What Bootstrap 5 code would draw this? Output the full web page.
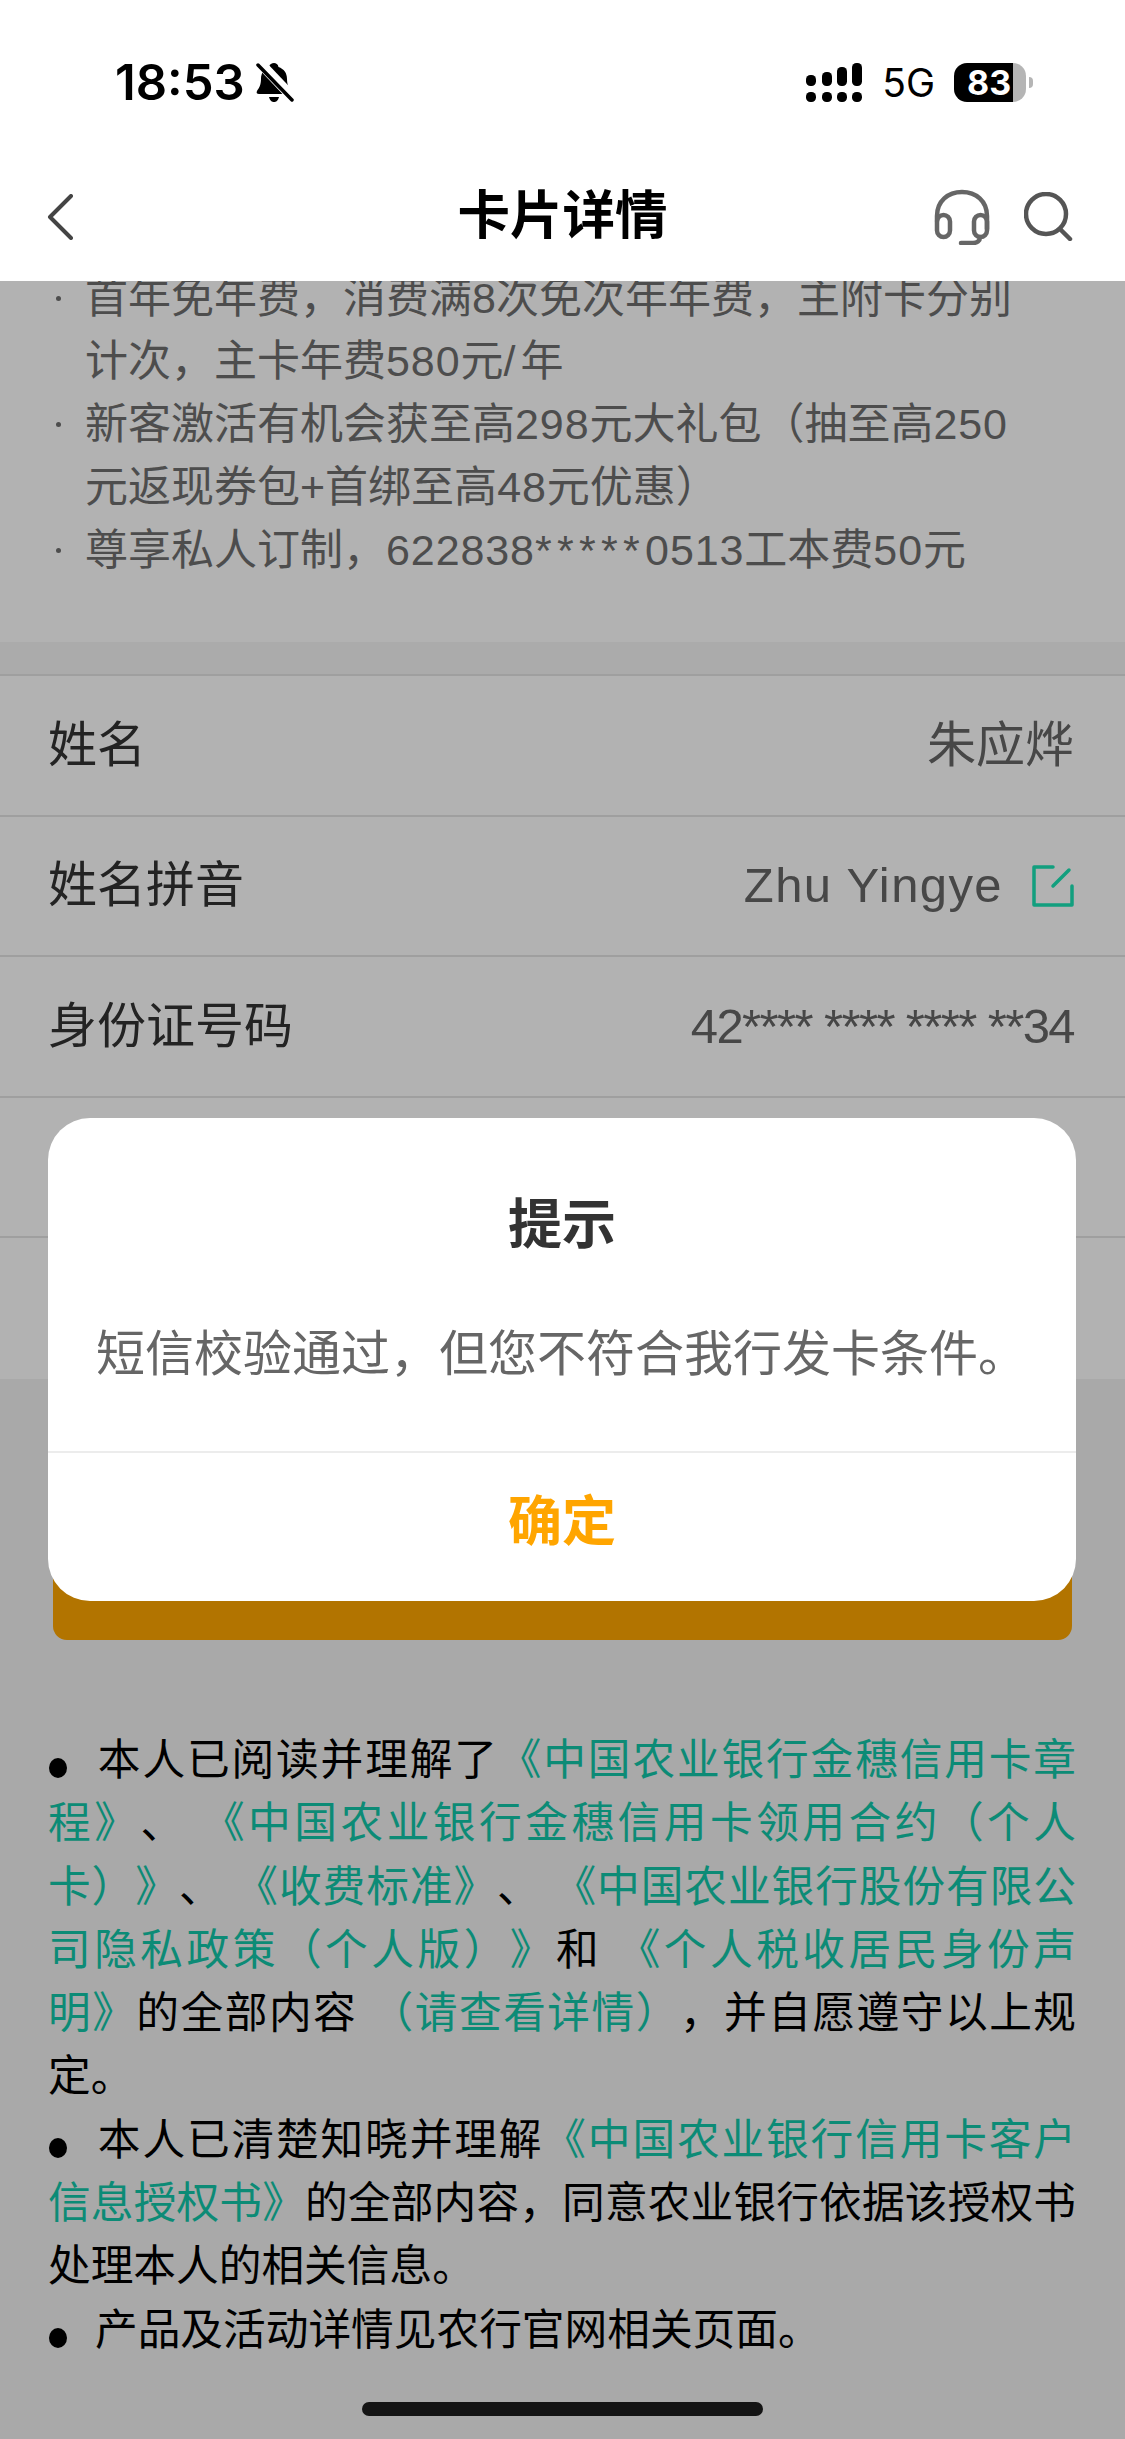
<!DOCTYPE html>
<html lang="zh-CN">
<head>
    <meta charset="UTF-8">
    <meta name="viewport" content="width=device-width, initial-scale=1.0">
    <title>卡片详情</title>
    <link href="https://cdn.jsdelivr.net/npm/bootstrap@5.3.2/dist/css/bootstrap.min.css" rel="stylesheet">
    <style>
        html, body {
            height: 2439px;
            overflow: hidden;
        }
        body {
            font-family: "Liberation Sans", "Noto Sans CJK SC", sans-serif;
            background-color: #f3f3f3;
            color: #000;
            position: relative;
            text-spacing-trim: space-all;
        }
        /* top bars stay above the backdrop */
        .top-head {
            height: 281px;
            position: relative;
            z-index: 1060;
            background: #fff;
        }
        .status-line {
            height: 140px;
            padding: 25px 92px 0 115px;
        }
        .clock {
            font-family: Inter, "Liberation Sans", sans-serif;
            font-size: 49px;
            font-weight: 600;
            line-height: 1;
        }
        .bell-icon {
            margin-left: 11px;
        }
        .net-label {
            font-family: Inter, "Liberation Sans", sans-serif;
            font-size: 39px;
            line-height: 1;
            margin: 0 19px 0 20px;
        }
        .battery {
            width: 72px;
            height: 39px;
            border-radius: 13px;
            overflow: hidden;
            background: linear-gradient(to right, #000 59px, #b5b5b5 59px);
            color: #fff;
            font-family: Inter, "Liberation Sans", sans-serif;
            font-size: 34px;
            font-weight: 700;
            line-height: 39px;
            padding-left: 13px;
        }
        .battery-nub {
            width: 4px;
            height: 11px;
            margin-left: 3px;
            background: #b5b5b5;
            border-radius: 0 4px 4px 0;
        }
        .title-line {
            height: 141px;
            padding: 12px 52px 0 47px;
        }
        .title-text {
            font-size: 52.5px;
            font-weight: 700;
            line-height: 1;
            color: #000;
            position: absolute;
            left: 0;
            right: 0;
            text-align: center;
        }
        .search-icon {
            margin-left: 34px;
        }
        .intro-list {
            background: #fff;
            margin: -14px 0 0 0;
            padding: 0 0 60px 56px;
            color: #6f6f6f;
            font-size: 43px;
            line-height: 63px;
        }
        .intro-item {
            width: 985px;
        }
        .tick {
            flex: 0 0 5px;
            height: 5px;
            margin: 29px 24px 0 0;
            border-radius: 50%;
            background: #6f6f6f;
        }
        .digits {
            letter-spacing: 0.9px;
        }
        .stars {
            letter-spacing: 5.3px;
        }
        .slash {
            letter-spacing: 5px;
        }
        .info-band {
            height: 32px;
            background: #f5f5f5;
        }
        .info-list {
            --bs-list-group-border-color: #e4e4e4;
            --bs-list-group-border-width: 2px;
            --bs-list-group-bg: #fff;
            --bs-list-group-item-padding-x: 48px;
            --bs-list-group-item-padding-y: 0;
            border-top: 2px solid #e4e4e4;
            border-radius: 0;
        }
        .info-row {
            height: 140.6px;
            padding-right: 51px !important;
            font-size: 49px;
            color: #333;
        }
        .info-value {
            color: #666;
        }
        .pinyin {
            letter-spacing: 1.4px;
        }
        .pinyin svg {
            margin-left: 29px;
        }
        .idno {
            letter-spacing: -1.6px;
        }
        .apply-btn {
            display: block;
            height: 90px;
            margin: 171px 53px 0 53px;
            width: 1019px;
            border: 0;
            border-radius: 14px;
            background: #ffa600;
        }
        .agree-text {
            margin: 89px 49px 0 48px;
            font-size: 42.7px;
            line-height: 63.3px;
            text-align: justify;
            color: #000;
        }
        .agree-text a {
            color: #12c7a9;
            text-decoration: none;
        }
        .big-dot {
            display: inline-block;
            width: 18px;
            height: 20px;
            margin: 0 29px 0 1px;
            border-radius: 50%;
            background: #000;
            vertical-align: -3px;
        }
        .big-dot-tight {
            margin-right: 28px;
        }
        .modal-backdrop {
            --bs-backdrop-opacity: 0.3;
        }
        .tip-dialog {
            position: absolute;
            top: 1118px;
            left: 48px;
            width: 1028px;
            z-index: 1055;
            --bs-modal-border-width: 0;
            --bs-modal-border-radius: 42px;
            --bs-modal-bg: #fff;
        }
        .tip-title {
            padding-top: 72px;
            font-size: 54px;
            font-weight: 700;
            line-height: 70px;
            color: #333;
            text-align: center;
        }
        .tip-msg {
            padding: 64px 0 67px 48px;
            font-size: 49px;
            line-height: 60px;
            color: #666;
            white-space: nowrap;
        }
        .tip-ok {
            height: 150px;
            padding: 0 0 10px;
            border: 0;
            border-top: 2px solid #ececec;
            border-radius: 0;
            background: none;
            font-size: 54px;
            font-weight: 700;
            color: #ffa500;
        }
        .home-bar {
            position: absolute;
            left: 362px;
            top: 2402px;
            width: 401px;
            height: 14px;
            border-radius: 7px;
            background: #141414;
            z-index: 1060;
        }
    </style>
</head>
<body>
    <header class="top-head">
        <div class="status-line d-flex align-items-center">
            <span class="clock">18:53</span>
            <svg class="bell-icon" width="38" height="41" viewBox="0 0 38 41">
                <path d="M18 1c2 0 4 1 4.5 4C28 7 31 11 31 17c0 6 2 9 4 12 1 2 0 3-2 3H3c-2 0-3-1-2-3 2-3 4-6 4-12 0-6 3-10 8-12C13.5 2 16 1 18 1z" fill="#000"/>
                <path d="M13 35h10c-1 4-3 5-5 5s-4-1-5-5z" fill="#000"/>
                <path d="M4 1l36 38" stroke="#fff" stroke-width="10"/>
                <path d="M2 3l34 35" stroke="#000" stroke-width="3.5" stroke-linecap="round"/>
            </svg>
            <div class="ms-auto d-flex align-items-center">
                <svg width="56" height="39" viewBox="0 0 56 39" fill="#000">
                    <rect x="0" y="12" width="10" height="11" rx="4.5"/>
                    <rect x="16" y="9" width="10" height="14" rx="4.5"/>
                    <rect x="31" y="4" width="10" height="19" rx="4.5"/>
                    <rect x="46" y="0" width="10" height="23" rx="4.5"/>
                    <rect x="0" y="29" width="10" height="10" rx="4.5"/>
                    <rect x="16" y="29" width="10" height="10" rx="4.5"/>
                    <rect x="31" y="29" width="10" height="10" rx="4.5"/>
                    <rect x="46" y="29" width="10" height="10" rx="4.5"/>
                </svg>
                <span class="net-label">5G</span>
                <div class="battery">83</div>
                <div class="battery-nub"></div>
            </div>
        </div>
        <div class="title-line d-flex align-items-center position-relative">
            <svg width="27" height="46" viewBox="0 0 27 46" fill="none" stroke="#444" stroke-width="4" stroke-linecap="round" stroke-linejoin="round">
                <path d="M24 2L3 23l21 21"/>
            </svg>
            <div class="title-text">卡片详情</div>
            <div class="ms-auto d-flex align-items-center">
                <svg width="56" height="56" viewBox="0 0 56 56" fill="none" stroke="#666" stroke-width="4.5" stroke-linecap="round">
                    <path d="M3 32V27C3 12 14 3 28 3s25 9 25 24v13"/>
                    <rect x="3" y="26" width="13" height="22" rx="6.5"/>
                    <rect x="40" y="26" width="13" height="22" rx="6.5"/>
                    <path d="M46 48c0 4-3 6-7 6H27"/>
                </svg>
                <svg class="search-icon" width="49" height="49" viewBox="0 0 49 49" fill="none" stroke="#555" stroke-width="4.5" stroke-linecap="round">
                    <circle cx="22" cy="22" r="20"/>
                    <path d="M36 37l10 10"/>
                </svg>
            </div>
        </div>
    </header>

    <ul class="intro-list list-unstyled">
        <li class="intro-item d-flex"><span class="tick"></span><span>首年免年费，消费满8次免次年年费，主附卡分别计次，主卡年费<span class="digits">580</span>元<span class="slash">/</span>年</span></li>
        <li class="intro-item d-flex"><span class="tick"></span><span>新客激活有机会获至高<span class="digits">298</span>元大礼包（抽至高<span class="digits">250</span>元返现券包+首绑至高<span class="digits">48</span>元优惠）</span></li>
        <li class="intro-item d-flex"><span class="tick"></span><span>尊享私人订制，<span class="digits">622838</span><span class="stars">*****</span><span class="digits">0513</span>工本费<span class="digits">50</span>元</span></li>
    </ul>

    <div class="info-band"></div>
    <div class="info-list list-group list-group-flush">
        <div class="info-row list-group-item d-flex align-items-center justify-content-between">
            <span>姓名</span><span class="info-value">朱应烨</span>
        </div>
        <div class="info-row list-group-item d-flex align-items-center justify-content-between">
            <span>姓名拼音</span>
            <span class="info-value pinyin d-flex align-items-center">Zhu Yingye
                <svg width="42" height="42" viewBox="0 0 42 42" fill="none" stroke="#1ae4b5" stroke-width="3.5" stroke-linecap="round" stroke-linejoin="round">
                    <path d="M21 2H2v38h38V21M37 5L21 21"/>
                </svg>
            </span>
        </div>
        <div class="info-row list-group-item d-flex align-items-center justify-content-between">
            <span>身份证号码</span><span class="info-value idno">42**** **** **** **34</span>
        </div>
        <div class="info-row list-group-item"></div>
        <div class="info-row list-group-item"></div>
    </div>

    <button type="button" class="apply-btn btn"></button>

    <div class="agree-text">
        <div><span class="big-dot"></span>本人已阅读并理解了<a href="#">《中国农业银行金穗信用卡章程》</a>、 <a href="#">《中国农业银行金穗信用卡领用合约（个人卡）》</a>、 <a href="#">《收费标准》</a>、 <a href="#">《中国农业银行股份有限公司隐私政策（个人版）》</a>和 <a href="#">《个人税收居民身份声明》</a>的全部内容 <a href="#">（请查看详情）</a>，并自愿遵守以上规定。</div>
        <div><span class="big-dot"></span>本人已清楚知晓并理解<a href="#">《中国农业银行信用卡客户信息授权书》</a>的全部内容，同意农业银行依据该授权书处理本人的相关信息。</div>
        <div><span class="big-dot big-dot-tight"></span>产品及活动详情见农行官网相关页面。</div>
    </div>

    <div class="modal-backdrop fade show"></div>

    <div class="tip-dialog modal-content">
        <div class="tip-title">提示</div>
        <div class="tip-msg">短信校验通过，但您不符合我行发卡条件。</div>
        <button type="button" class="tip-ok btn w-100" data-bs-dismiss="modal">确定</button>
    </div>

    <div class="home-bar"></div>

    <script src="https://cdn.jsdelivr.net/npm/bootstrap@5.3.2/dist/js/bootstrap.bundle.min.js"></script>
</body>
</html>
